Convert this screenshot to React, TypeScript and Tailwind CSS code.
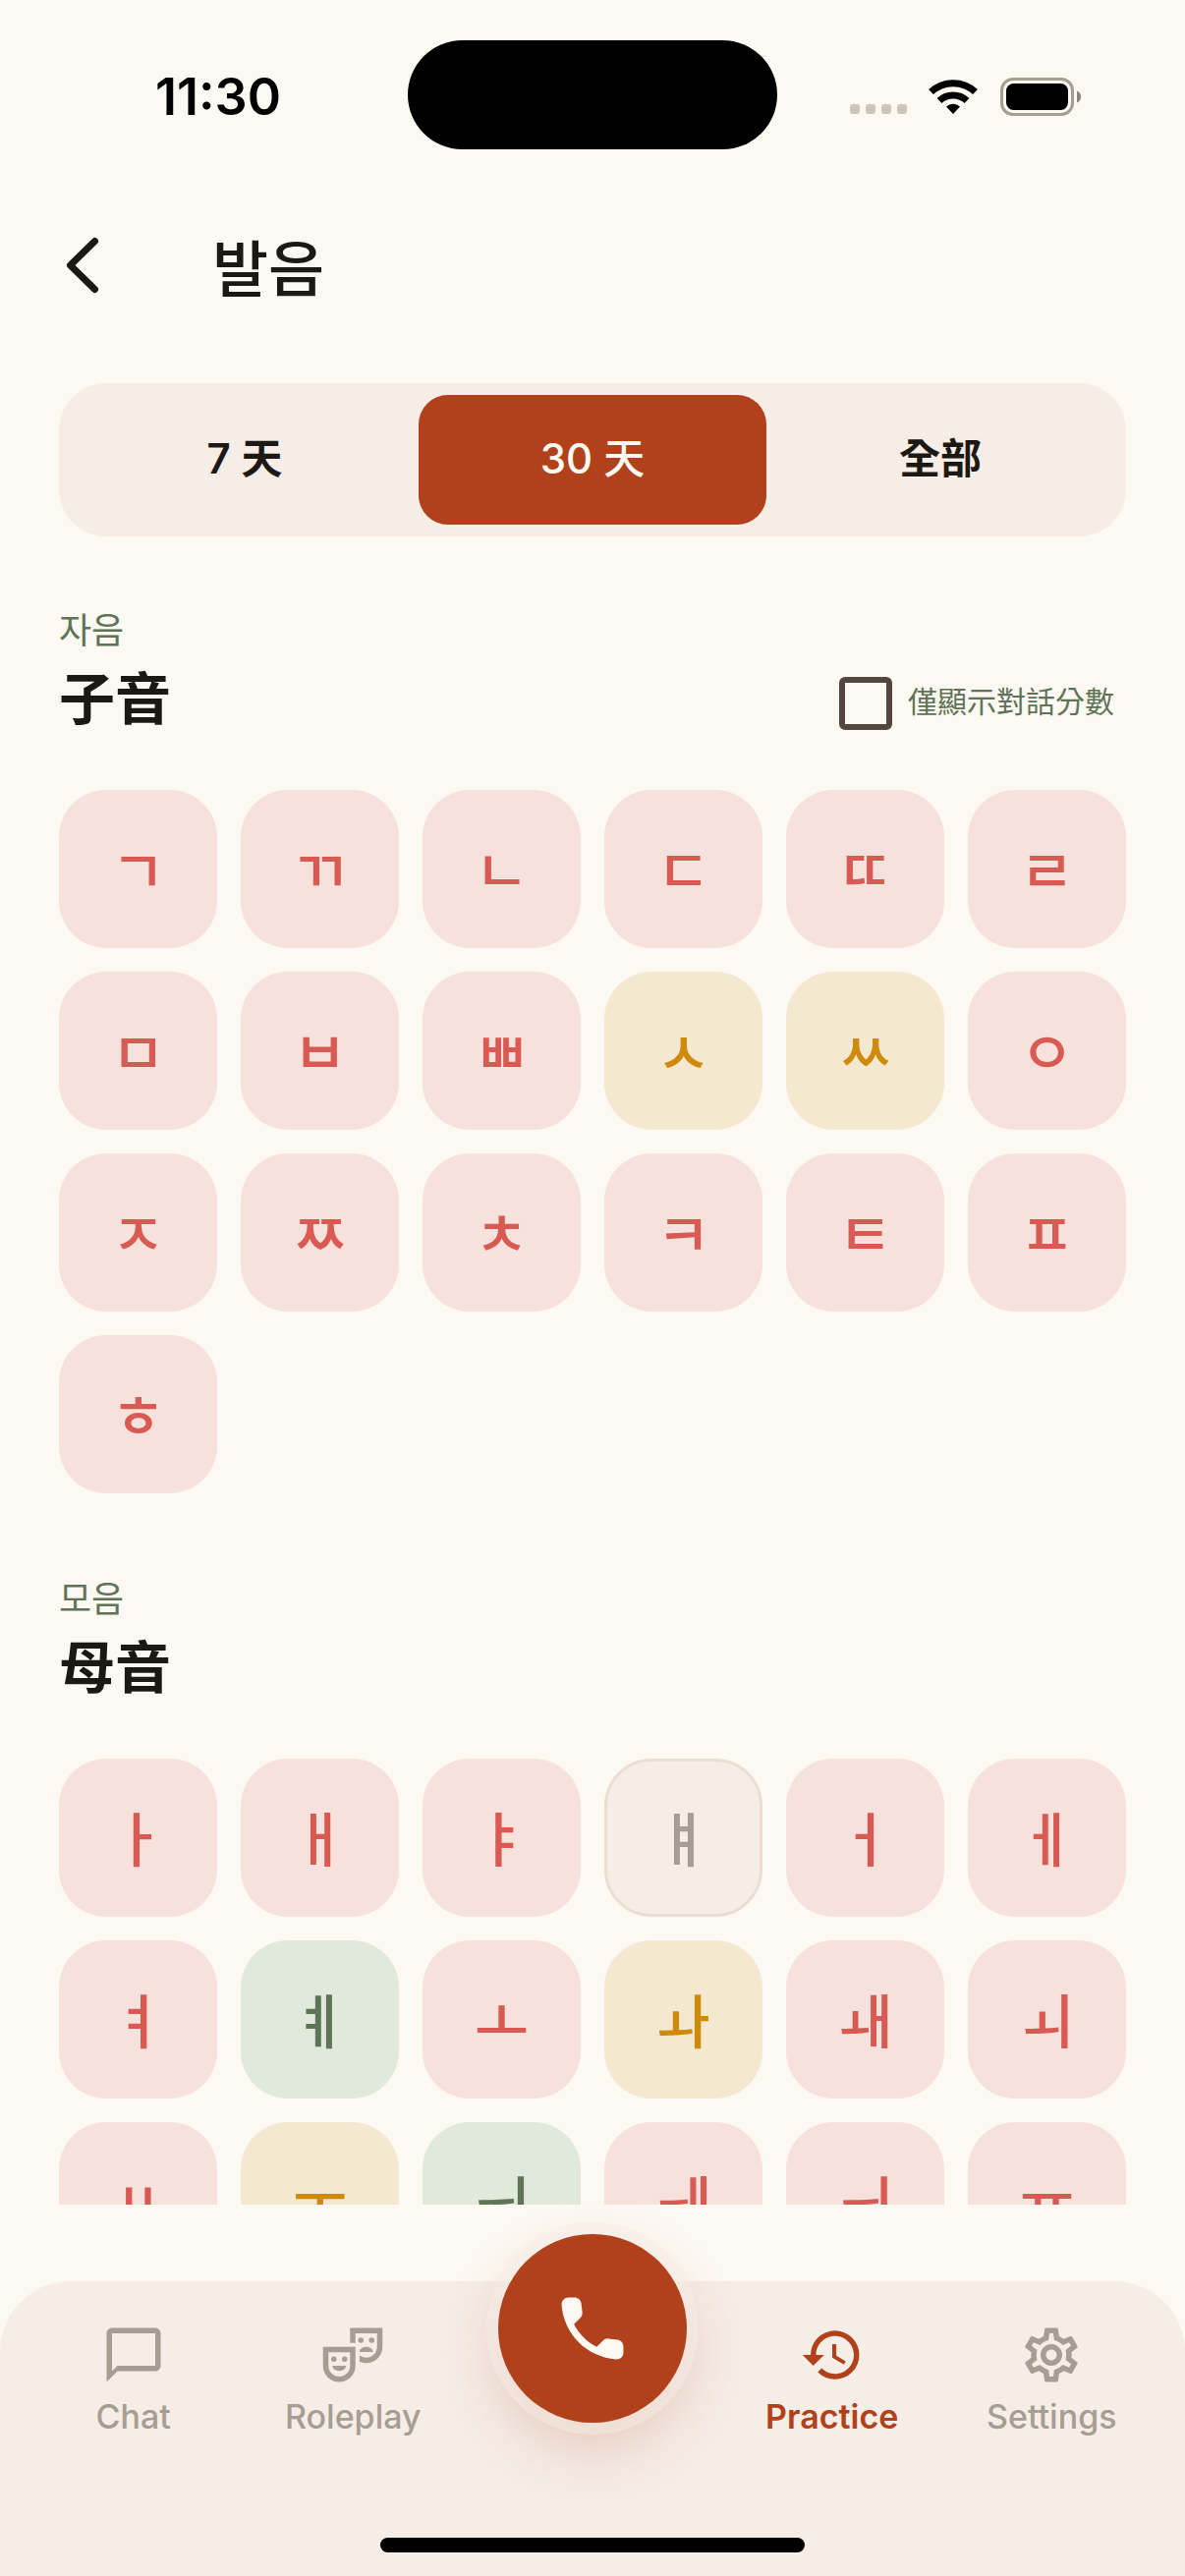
import { useState } from "react";
import { MdChatBubbleOutline, MdHistory, MdOutlineSettings, MdOutlineTheaterComedy } from "react-icons/md";

type Level = "low" | "mid" | "high" | "none";
type Letter = { char: string; level: Level };

const levelStyles: Record<Level, string> = {
    low: "bg-[#f6e1dc] text-[#d85a52]",
    mid: "bg-[#f4e8d1] text-[#ce8a08]",
    high: "bg-[#e1e9dd] text-[#5f7356]",
    none: "bg-[#f5ede6] text-[#a69d93] border-3 border-[#ebdfd3]",
};

const toLetters = (chars: string, levels: Record<string, Level>): Letter[] =>
    chars.split(" ").map((char) => ({ char, level: levels[char] ?? "low" }));

const consonants = toLetters("ㄱ ㄲ ㄴ ㄷ ㄸ ㄹ ㅁ ㅂ ㅃ ㅅ ㅆ ㅇ ㅈ ㅉ ㅊ ㅋ ㅌ ㅍ ㅎ", { ㅅ: "mid", ㅆ: "mid" });
const vowels = toLetters("ㅏ ㅐ ㅑ ㅒ ㅓ ㅔ ㅕ ㅖ ㅗ ㅘ ㅙ ㅚ ㅛ ㅜ ㅝ ㅞ ㅟ ㅠ", {
    ㅒ: "none",
    ㅖ: "high",
    ㅘ: "mid",
    ㅜ: "mid",
    ㅝ: "high",
});

const ranges = ["7 天", "30 天", "全部"];

const nav = [
    { href: "#chat", label: "Chat", icon: MdChatBubbleOutline },
    { href: "#roleplay", label: "Roleplay", icon: MdOutlineTheaterComedy },
    { href: "#practice", label: "Practice", icon: MdHistory },
    { href: "#settings", label: "Settings", icon: MdOutlineSettings },
];

function StatusBar() {
    return (
        <div className="relative flex h-[186px] shrink-0 items-center justify-between px-[105px] pt-3">
            <span className="w-[234px] text-center text-[52px] font-semibold text-black">11:30</span>
            <div className="absolute top-[41px] left-1/2 h-[111px] w-[376px] -translate-x-1/2 rounded-full bg-black" />
            <svg width="236" height="40" viewBox="0 0 236 40" aria-hidden="true">
                <g fill="#cdc4bb">
                    <rect x="0" y="27" width="10" height="10" rx="3" />
                    <rect x="16" y="27" width="10" height="10" rx="3" />
                    <rect x="32" y="27" width="10" height="10" rx="3" />
                    <rect x="48" y="27" width="10" height="10" rx="3" />
                </g>
                <path d="M105 37l-7-7.500a10.500 10.500 0 0 1 14 0z" fill="#000" />
                <path d="M91 23.500a20.500 20.500 0 0 1 28 0M82.500 14.500a33 33 0 0 1 45 0" fill="none" stroke="#000" strokeWidth="7" />
                <rect x="154.500" y="1.500" width="72" height="36" rx="11.500" fill="none" stroke="#a69d93" strokeWidth="3" />
                <rect x="159" y="6" width="63" height="27" rx="7.500" fill="#000" />
                <path d="M231 13.500a6.500 6.500 0 0 1 0 12z" fill="#8c857d" />
            </svg>
        </div>
    );
}

function LetterGrid({ letters }: { letters: Letter[] }) {
    return (
        <div className="grid grid-cols-6 gap-6">
            {letters.map(({ char, level }) => (
                <button
                    key={char}
                    className={`flex aspect-square items-center justify-center rounded-[48px] pt-1 text-[60px] font-medium ${levelStyles[level]}`}
                >
                    {char}
                </button>
            ))}
        </div>
    );
}

function SectionTitle({ korean, title }: { korean: string; title: string }) {
    return (
        <div>
            <p className="text-[36px] leading-[54px] text-[#5f7356]">{korean}</p>
            <h2 className="text-[57px] leading-[86px] font-bold">{title}</h2>
        </div>
    );
}

export default function App() {
    const [range, setRange] = useState("30 天");
    const [onlyChat, setOnlyChat] = useState(false);
    const [active, setActive] = useState("Practice");

    const renderTab = ({ href, label, icon: Icon }: (typeof nav)[number]) => (
        <a
            key={href}
            href={href}
            onClick={() => setActive(label)}
            className={`flex flex-1 flex-col items-center gap-1.5 text-[34px] leading-[48px] ${
                active === label ? "font-semibold text-[#b0411b]" : "font-medium text-[#a69d93]"
            }`}
        >
            <Icon size={66} />
            {label}
        </a>
    );

    return (
        <div className="flex h-screen flex-col overflow-hidden bg-[#fcf8f2] font-[Inter,'Noto_Sans_CJK_KR',sans-serif] text-[#1c1814]">
            <StatusBar />

            {/* Header */}
            <header className="flex h-[168px] shrink-0 items-center px-[60px]">
                <button aria-label="Back" className="flex w-[156px]">
                    <svg width="48" height="66" viewBox="0 0 48 66" fill="none" stroke="currentColor" strokeWidth="7" strokeLinecap="round" strokeLinejoin="round">
                        <path d="M36.500 8.500L11.500 33l25 24.500" />
                    </svg>
                </button>
                <h1 className="pt-2 text-[62px] font-medium">발음</h1>
            </header>

            {/* Scores */}
            <main className="flex-1 overflow-hidden px-[60px] pt-9" lang="zh-Hant">
                <div className="flex rounded-[48px] bg-[#f5ede6] p-3">
                    {ranges.map((item) => (
                        <button
                            key={item}
                            aria-pressed={range === item}
                            onClick={() => setRange(item)}
                            className={`h-[132px] flex-1 rounded-[30px] pb-1 font-[Inter,'Noto_Sans_CJK_TC',sans-serif] text-[42px] ${
                                range === item ? "bg-[#b0411b] font-medium text-[#fcf9f3]" : "font-semibold"
                            }`}
                        >
                            {item}
                        </button>
                    ))}
                </div>

                <section className="flex flex-col gap-[49px] pt-[69px]">
                    <div className="flex items-end justify-between">
                        <SectionTitle korean="자음" title="子音" />
                        <label className="flex items-center gap-4 pr-3 pb-2 font-['Noto_Sans_CJK_TC',sans-serif] text-[30px] leading-[54px] text-[#5f7356]">
                            <input
                                type="checkbox"
                                checked={onlyChat}
                                onChange={(e) => setOnlyChat(e.target.checked)}
                                className="size-[54px] appearance-none rounded-[6px] border-6 border-[#554541] checked:bg-[#554541]"
                            />
                            <span className="pb-2">僅顯示對話分數</span>
                        </label>
                    </div>
                    <LetterGrid letters={consonants} />
                </section>

                <section className="flex flex-col gap-[49px] pt-[81px]">
                    <SectionTitle korean="모음" title="母音" />
                    <LetterGrid letters={vowels} />
                </section>
            </main>

            {/* Bottom bar */}
            <footer className="relative shrink-0 pt-[78px]">
                <nav className="flex h-[300px] rounded-t-[72px] bg-[#f5ede6] px-6 pt-[42px]">
                    {nav.slice(0, 2).map(renderTab)}
                    <div className="w-[264px]" />
                    {nav.slice(2).map(renderTab)}
                </nav>
                <button
                    aria-label="Call"
                    className="absolute top-[30px] left-1/2 flex size-[192px] -translate-x-1/2 items-center justify-center rounded-full bg-[#b0411b] text-[#fcf9f3] shadow-[0_0_0_12px_rgba(245,237,230,0.5),0_24px_60px_rgba(176,65,27,0.22)]"
                >
                    <svg width="84" height="84" viewBox="0 0 24 24" fill="currentColor">
                        <path d="M19.230 15.260l-2.540-.29c-.61-.07-1.210.14-1.640.57l-1.840 1.840c-2.830-1.440-5.150-3.750-6.590-6.590l1.850-1.850c.43-.43.64-1.030.57-1.640l-.29-2.520c-.12-1.010-.97-1.770-1.990-1.770H5.030c-1.130 0-2.070.94-2 2.070.53 8.540 7.360 15.360 15.890 15.890 1.130.07 2.070-.87 2.070-2v-1.730c.01-1.010-.75-1.860-1.760-1.980z" />
                    </svg>
                </button>
                <div className="absolute bottom-6 left-1/2 h-[15px] w-[432px] -translate-x-1/2 rounded-full bg-black" />
            </footer>
        </div>
    );
}
